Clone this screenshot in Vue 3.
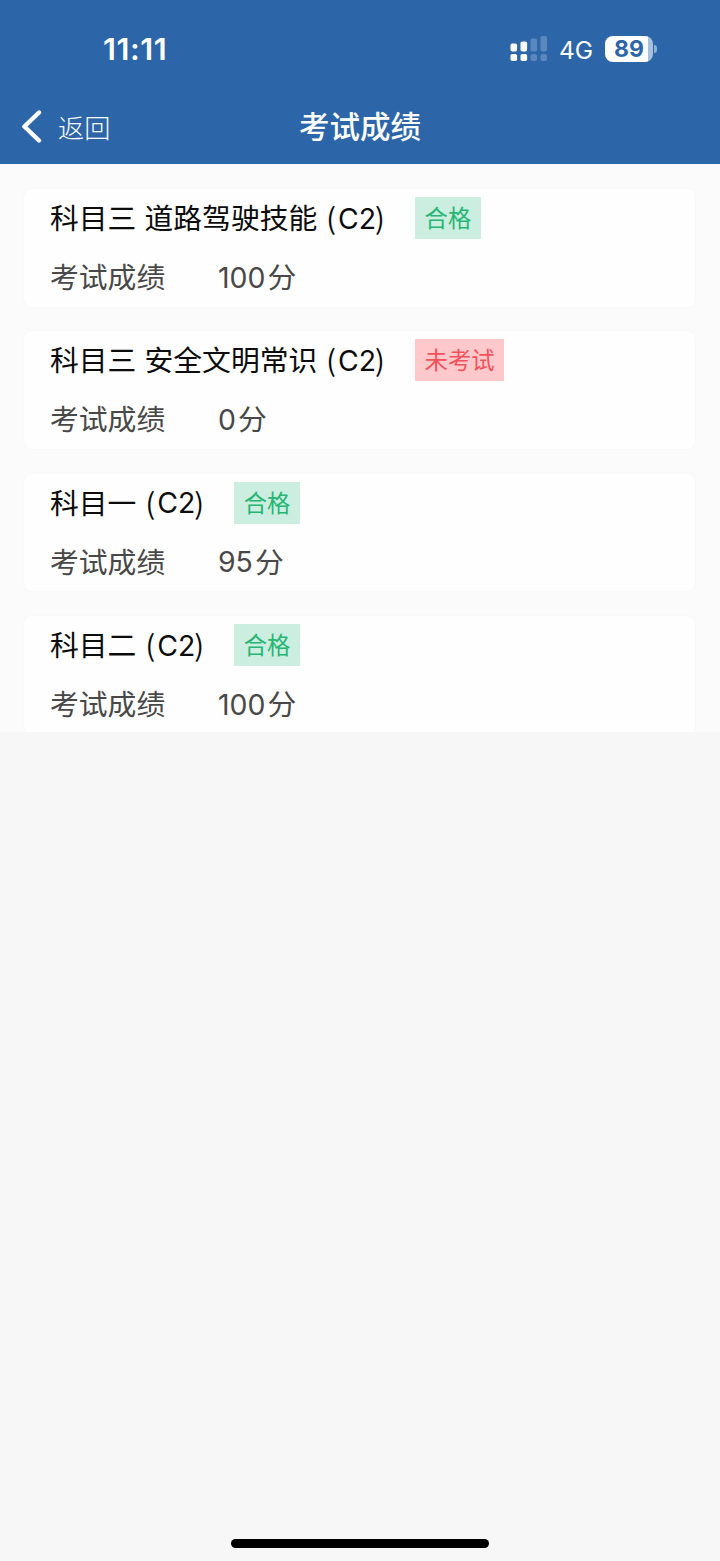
<template>
  <div class="page">
    <header class="header">
      <div class="status-bar">
        <span class="time">11:11</span>
        <div class="status-right">
          <svg class="signal" width="38" height="26" viewBox="0 0 38 26">
            <g fill="#fff">
              <rect x="0.5" y="7.5" width="6.6" height="8" rx="1.8" />
              <rect x="10.5" y="5.5" width="6.6" height="10" rx="1.8" />
              <rect x="0.5" y="18" width="6.6" height="7" rx="1.8" />
              <rect x="10.5" y="18" width="6.6" height="7" rx="1.8" />
            </g>
            <g fill="#fff" opacity="0.22">
              <rect x="20.5" y="2.5" width="6.6" height="13" rx="1.8" />
              <rect x="30.5" y="0" width="6.6" height="15.5" rx="1.8" />
              <rect x="20.5" y="18" width="6.6" height="7" rx="2.6" />
              <rect x="30.5" y="18" width="6.6" height="7" rx="2.6" />
            </g>
          </svg>
          <span class="network">4G</span>
          <div class="battery">
            <span class="battery-body">89</span>
            <span class="battery-cap"></span>
          </div>
        </div>
      </div>
      <div class="nav-bar">
        <div class="back">
          <svg width="22" height="34" viewBox="0 0 22 34" fill="none" stroke="#fff" stroke-width="4.4" stroke-linecap="round" stroke-linejoin="round">
            <path d="M18 3.5 L3.4 17.5 L18 31.5" />
          </svg>
          <span class="back-text">返回</span>
        </div>
        <h1 class="nav-title">考试成绩</h1>
      </div>
    </header>

    <main class="list">
      <section v-for="item in exams" :key="item.name" class="card">
        <div class="card-head">
          <span class="name">{{ item.name }}</span>
          <span class="paren left">(</span>
          <span class="type">{{ item.type }}</span>
          <span class="paren right">)</span>
          <span class="tag" :class="item.passed ? 'pass' : 'pending'">{{ item.passed ? '合格' : '未考试' }}</span>
        </div>
        <div class="card-row">
          <span class="label">考试成绩</span>
          <span class="score">{{ item.score }}</span>
          <span class="unit">分</span>
        </div>
      </section>
    </main>

    <div class="home-indicator"></div>
  </div>
</template>

<script setup>
import { ref } from 'vue'

const exams = ref([
  { name: '科目三 道路驾驶技能', type: 'C2', score: 100, passed: true },
  { name: '科目三 安全文明常识', type: 'C2', score: 0, passed: false },
  { name: '科目一', type: 'C2', score: 95, passed: true },
  { name: '科目二', type: 'C2', score: 100, passed: true }
])
</script>

<style>
body {
  margin: 0;
  background: #f7f7f7;
}
</style>

<style scoped>
.page {
  display: flex;
  flex-direction: column;
  height: 1561px;
  background: #f7f7f7;
  font-family: Inter, "Noto Sans CJK SC", sans-serif;
}

.header {
  height: 163.5px;
  flex-shrink: 0;
  background: #2c66a9;
  color: #fff;
}

.status-bar {
  display: flex;
  justify-content: space-between;
  align-items: center;
  height: 98px;
  padding: 0 63px 0 103px;
}

.time {
  padding-bottom: 2px;
  font-size: 30.5px;
  font-weight: 600;
  letter-spacing: 0.6px;
}

.status-right {
  display: flex;
  align-items: center;
}

.network {
  margin-left: 11px;
  padding-top: 2px;
  font-size: 24.5px;
  font-weight: 400;
  line-height: 26px;
}

.battery {
  display: flex;
  align-items: center;
  margin-left: 12px;
}

.battery-body {
  width: 48px;
  height: 26px;
  border-radius: 8px;
  background: linear-gradient(90deg, #fff 43px, #a6c0de 43px);
  color: #2c66a9;
  font-size: 23px;
  font-weight: 700;
  line-height: 26px;
  text-align: center;
}

.battery-cap {
  width: 3px;
  height: 8px;
  margin-left: 1px;
  border-radius: 0 3px 3px 0;
  background: #8fb0d5;
}

.nav-bar {
  display: grid;
  grid-template-columns: 1fr auto 1fr;
  align-items: center;
  height: 56px;
  padding: 0 21px;
}

.back {
  display: flex;
  align-items: center;
  gap: 15px;
  font-size: 26.2px;
  font-weight: 300;
}

.back-text {
  padding-top: 1px;
}

.nav-title {
  margin: 0;
  padding-bottom: 3px;
  font-size: 30.5px;
  font-weight: 500;
}

.list {
  display: flex;
  flex-direction: column;
  gap: 24.8px;
  height: 568.5px;
  box-sizing: border-box;
  padding: 25.5px 25px 0 24px;
  background: #fbfbfb;
  overflow: hidden;
}

.card {
  height: 117.6px;
  flex-shrink: 0;
  box-sizing: border-box;
  padding: 8px 26px 0;
  border-radius: 8px;
  background: #fefefe;
  box-shadow: 0 0 3px rgba(0, 0, 0, 0.03);
}

.card-head {
  display: flex;
  align-items: center;
  height: 42px;
  color: #0c0c0c;
  font-size: 28.8px;
}

.name {
  padding-bottom: 3px;
  white-space: pre;
}

.type {
  margin-left: 2px;
  font-size: 28.4px;
}

.paren {
  padding-bottom: 3px;
  font-family: "Noto Sans CJK SC", sans-serif;
  font-size: 28.8px;
}

.left {
  margin-left: 9px;
}

.right {
  margin-left: -1px;
}

.type + .right + .tag {
  margin-left: 30px;
}

.tag {
  height: 42px;
  padding: 0 9.8px;
  font-size: 23.3px;
  line-height: 43px;
}

.pass {
  background: #cbeee0;
  color: #27b573;
}

.pending {
  background: #ffc9cb;
  color: #f4515a;
}

.card-row {
  display: flex;
  align-items: center;
  height: 42px;
  margin-top: 17px;
  color: #484848;
  font-size: 28.8px;
}

.label {
  width: 168px;
  padding-bottom: 3px;
}

.score {
  font-size: 28.4px;
}

.unit {
  margin-left: 2px;
  padding-bottom: 3px;
}

.home-indicator {
  width: 258px;
  height: 8.5px;
  margin: auto auto 13.5px;
  border-radius: 5px;
  background: #000;
}
</style>
